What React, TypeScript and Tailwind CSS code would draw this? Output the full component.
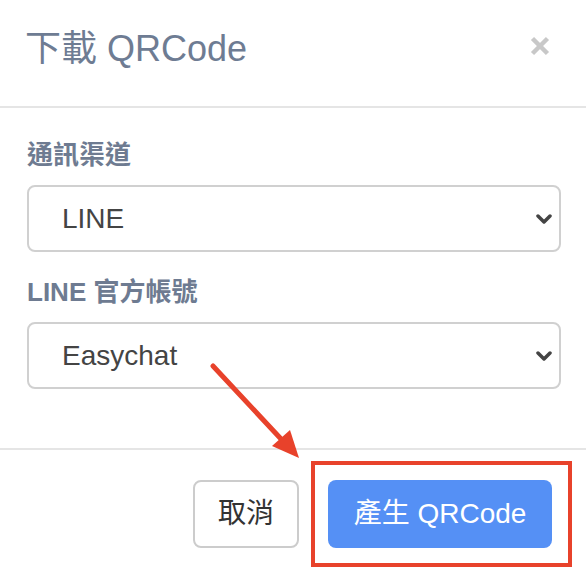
import React from "react";

function Chevron() {
  return (
    <svg width="16" height="12" viewBox="0 0 16 12" className="pointer-events-none absolute right-[9px] top-1/2 -translate-y-1/2">
      <polyline points="2,3 8,9 14,3" fill="none" stroke="#444" strokeWidth="3.5" strokeLinecap="round" strokeLinejoin="round" />
    </svg>
  );
}

function Field({ label, value }: { label: string; value: string }) {
  return (
    <div className="flex flex-col">
      <label className="text-[26px] leading-[36px] font-bold text-[#6e7b91] mb-[12px]">{label}</label>
      <div className="relative">
        <div className="h-[67px] w-full rounded-[8px] border-2 border-[#d0d0d0] bg-white pl-[33px] flex items-center text-[28px] text-[#444]">
          {value}
        </div>
        <Chevron />
      </div>
    </div>
  );
}

export default function App() {
  return (
    <div className="relative w-[586px] h-[576px] bg-white overflow-hidden font-['Liberation_Sans','Noto_Sans_CJK_TC',sans-serif]">
      <div className="h-[108px] border-b-2 border-[#e5e5e5] flex items-center justify-between pl-[25px] pr-[36px] pb-[8px]">
        <h1 className="text-[36px] leading-[44px] text-[#6e7c93]">下載 QRCode</h1>
        <svg width="20" height="20" viewBox="0 0 20 20" className="mb-[6px]">
          <line x1="2.5" y1="2.5" x2="17.5" y2="17.5" stroke="#c8c8c8" strokeWidth="4.5" />
          <line x1="17.5" y1="2.5" x2="2.5" y2="17.5" stroke="#c8c8c8" strokeWidth="4.5" />
        </svg>
      </div>
      <div className="pt-[29px] pb-[59px] pl-[27px] pr-[25px] flex flex-col gap-[22px]">
        <Field label="通訊渠道" value="LINE" />
        <Field label="LINE 官方帳號" value="Easychat" />
      </div>
      <div className="border-t-2 border-[#e5e5e5] pt-[30px] pr-[34px] flex justify-end gap-[29px]">
        <button className="h-[68px] w-[106px] rounded-[8px] border-2 border-[#cccccc] bg-white text-[28px] text-[#333]">取消</button>
        <button className="h-[68px] w-[224px] rounded-[8px] bg-[#5590f5] text-[28px] text-white">產生 QRCode</button>
      </div>
      <div className="absolute left-[311px] top-[461px] w-[261px] h-[106px] border-[4px] border-[#e8422b]" />
      <svg className="absolute left-0 top-0" width="586" height="576" viewBox="0 0 586 576">
        <line x1="213" y1="366" x2="282" y2="440" stroke="#e8422b" strokeWidth="5" strokeLinecap="round" />
        <polygon points="299,458 272,446 290,430" fill="#e8422b" />
      </svg>
    </div>
  );
}
